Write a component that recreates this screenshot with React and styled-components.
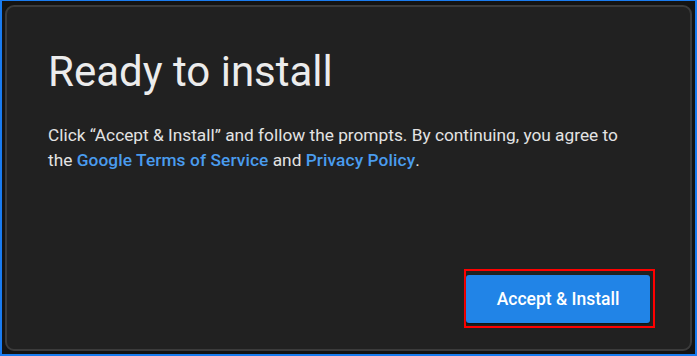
import React from 'react';
import styled, { createGlobalStyle } from 'styled-components';

const GlobalStyle = createGlobalStyle`
  html, body {
    margin: 0;
    padding: 0;
    background: #131313;
  }
  * { box-sizing: border-box; }
`;

// blue focus frame round the whole dialog
const Frame = styled.div`
  width: 697px;
  height: 356px;
  border-style: solid;
  border-color: #1a7cf0;
  border-width: 1px 2px 2px 2px;
  background: #131313;
  padding: 4px 3px 3px 3px;
  display: flex;
`;

const Card = styled.div`
  flex: 1;
  display: flex;
  flex-direction: column;
  background: #212121;
  border: 2px solid #3b3b3b;
  border-radius: 9px;
  padding: 41px 35px 21px 41px;
  font-family: Roboto, "Liberation Sans", sans-serif;
`;

const Title = styled.h1`
  margin: 0;
  font-size: 42px;
  font-weight: 400;
  line-height: 48px;
  color: #ececec;
`;

const Body = styled.p`
  margin: 27px 0 0 0;
  font-size: 17.3px;
  line-height: 25px;
  color: #e3e3e3;
`;

const Link = styled.a`
  color: #4a9cee;
  text-decoration: none;
  font-weight: 500;
  letter-spacing: 0.1px;
`;

const Actions = styled.div`
  margin-top: auto;
  display: flex;
  justify-content: flex-end;
`;

// red highlight box drawn round the button
const Highlight = styled.div`
  border: 2px solid #ff0000;
  padding: 4px 3px 3px 0;
`;

const InstallButton = styled.button`
  display: block;
  width: 184px;
  height: 48px;
  border: 0;
  border-radius: 3px;
  background: #2184e7;
  color: #ffffff;
  font-family: Roboto, "Liberation Sans", sans-serif;
  font-size: 17.5px;
  font-weight: 500;
  cursor: pointer;
  box-shadow: 0 1px 2px rgba(0, 0, 0, 0.5);
`;

export default function App() {
  return (
    <>
      <GlobalStyle />
      <Frame>
        <Card>
          <Title>Ready to install</Title>
          <Body>
            Click “Accept &amp; Install” and follow the prompts. By continuing, you agree to
            <br />
            the <Link href="#">Google Terms of Service</Link> and <Link href="#">Privacy Policy</Link>.
          </Body>
          <Actions>
            <Highlight>
              <InstallButton>Accept &amp; Install</InstallButton>
            </Highlight>
          </Actions>
        </Card>
      </Frame>
    </>
  );
}
